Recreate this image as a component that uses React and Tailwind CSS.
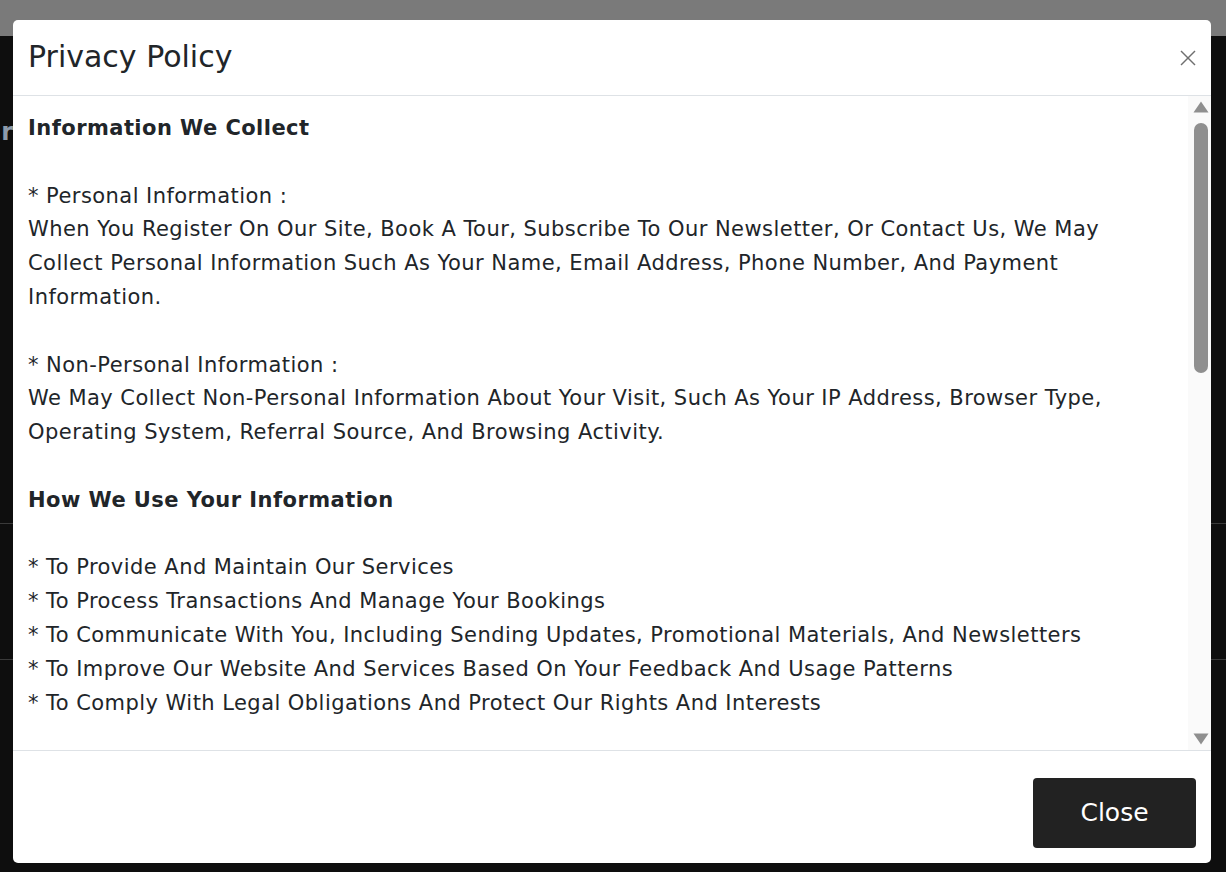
import React from 'react';

const sections = [
  {
    title: 'Information We Collect',
    blocks: [
      [
        '* Personal Information :',
        'When You Register On Our Site, Book A Tour, Subscribe To Our Newsletter, Or Contact Us, We May Collect Personal Information Such As Your Name, Email Address, Phone Number, And Payment Information.',
      ],
      [
        '* Non-Personal Information :',
        'We May Collect Non-Personal Information About Your Visit, Such As Your IP Address, Browser Type, Operating System, Referral Source, And Browsing Activity.',
      ],
    ],
  },
  {
    title: 'How We Use Your Information',
    blocks: [
      [
        '* To Provide And Maintain Our Services',
        '* To Process Transactions And Manage Your Bookings',
        '* To Communicate With You, Including Sending Updates, Promotional Materials, And Newsletters',
        '* To Improve Our Website And Services Based On Your Feedback And Usage Patterns',
        '* To Comply With Legal Obligations And Protect Our Rights And Interests',
      ],
    ],
  },
  {
    title: 'Sharing Your Information',
    blocks: [
      [
        '* Service Providers :',
        'We May Share Your Information With Trusted Third-Party Service Providers Who Assist Us In Operating Our Website, Processing Payments, And Delivering Our Services.',
      ],
      [
        '* Legal Requirements :',
        'We May Disclose Your Information If Required By Law Or In Response To Valid Requests By Public Authorities.',
      ],
    ],
  },
  {
    title: 'Data Security',
    blocks: [
      [
        'We Implement Appropriate Security Measures To Protect Your Personal Information From Unauthorized Access, Alteration, Disclosure, Or Destruction.',
      ],
    ],
  },
];

const CloseIcon = () => (
  <svg width="16" height="16" viewBox="0 0 16 16" fill="none" stroke="#6f6f6f" strokeWidth="1.4">
    <line x1="1" y1="1" x2="15" y2="15" />
    <line x1="15" y1="1" x2="1" y2="15" />
  </svg>
);

const Arrow = ({ down }) => (
  <svg width="16" height="12" viewBox="0 0 16 12" fill="#8f8f8f">
    {down ? <path d="M0.5 0.5 L15.5 0.5 L8 11.5 Z" /> : <path d="M8 0.5 L15.5 11.5 L0.5 11.5 Z" />}
  </svg>
);

// fake vertical scrollbar, drawn to look like the browser one
const ScrollBar = () => (
  <div className="w-[23px] shrink-0 bg-[#fafafa] flex flex-col items-center pl-[2px] pt-[5px] pb-[5px]">
    <Arrow />
    <div className="mt-[10px] w-[14px] h-[250px] rounded-full bg-[#8f8f8f]" />
    <div className="flex-1" />
    <Arrow down />
  </div>
);

const PrivacyModal = () => {
  return (
    <div className="absolute inset-0 flex justify-center pt-[20px] pl-[13px] pr-[15px] pb-[9px]">
      <div className="w-full flex flex-col bg-white rounded-[5px] overflow-hidden text-[#212529]">
        {/* header */}
        <div className="h-[76px] shrink-0 flex items-center justify-between pl-[15px] pr-[15px] border-b border-[#dee2e6]">
          <h5 className="text-[30px] leading-none pb-[1px]">Privacy Policy</h5>
          <button className="w-[16px] h-[16px] flex items-center justify-center mt-[1px]">
            <CloseIcon />
          </button>
        </div>

        {/* body */}
        <div className="flex-1 min-h-0 flex">
          <div className="flex-1 min-w-0 overflow-hidden pt-[16px] pb-[15px] px-[15px] text-[21px] leading-[33.8px] tracking-[0.45px]">
            {sections.map((s, i) => (
              <div key={i} className="mb-[33.8px]">
                <h6 className="font-bold mb-[33.8px]">{s.title}</h6>
                {s.blocks.map((lines, j) => (
                  <div key={j} className={j > 0 ? 'mt-[33.8px]' : ''}>
                    {lines.map((l, k) => (
                      <p key={k}>{l}</p>
                    ))}
                  </div>
                ))}
              </div>
            ))}
          </div>
          <ScrollBar />
        </div>

        {/* footer */}
        <div className="h-[113px] shrink-0 border-t border-[#dee2e6] flex items-start justify-end pt-[27px] pr-[15px]">
          <button className="w-[163px] h-[70px] rounded-[4px] bg-[#222222] text-white text-[25px] flex items-center justify-center">
            Close
          </button>
        </div>
      </div>
    </div>
  );
};

export default function App() {
  return (
    <div
      className="relative w-full h-screen overflow-hidden bg-[#0e0e0e]"
      style={{ fontFamily: '"DejaVu Sans", sans-serif' }}
    >
      <div className="h-[36px] bg-[#7a7a7a]" />
      <div className="flex items-start pt-[78px]">
        <div className="w-[13px] overflow-hidden flex justify-end">
          <span className="text-[24px] leading-[36px] font-bold text-[#8d9bab] whitespace-nowrap">ir</span>
        </div>
      </div>
      <div className="mt-[373px] border-t border-[#3a3a3a]" />
      <div className="mt-[135px] border-t border-[#3a3a3a]" />
      <PrivacyModal />
    </div>
  );
}
